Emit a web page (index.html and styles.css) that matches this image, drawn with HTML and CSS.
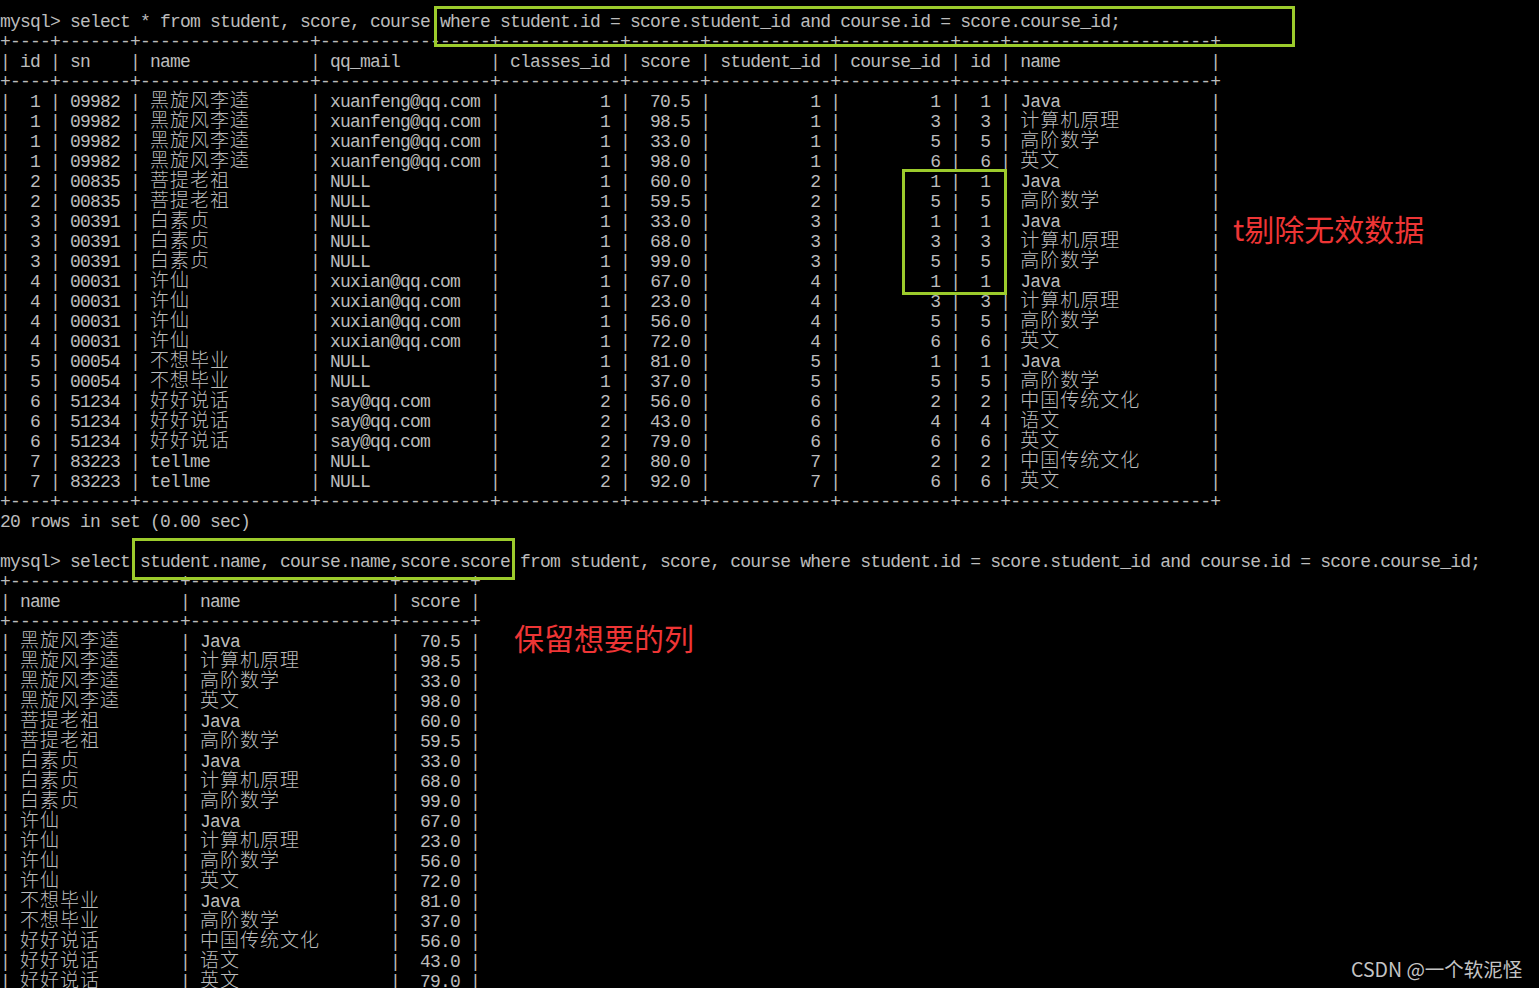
FILE: index.html
```html
<!DOCTYPE html>
<html lang="zh">
<head>
<meta charset="utf-8">
<title>mysql</title>
<link rel="stylesheet" href="styles.css">
</head>
<body>
<div class="term">
<div class="l">mysql&gt; select * from student, score, course where student.id = score.student_id and course.id = score.course_id;</div>
<div class="l">+----+-------+-----------------+-----------------+------------+-------+------------+-----------+----+--------------------+</div>
<div class="l">| id | sn    | name            | qq_mail         | classes_id | score | student_id | course_id | id | name               |</div>
<div class="l">+----+-------+-----------------+-----------------+------------+-------+------------+-----------+----+--------------------+</div>
<div class="l">|  1 | 09982 | <span class="c">黑旋风李逵</span>      | xuanfeng@qq.com |          1 |  70.5 |          1 |         1 |  1 | Java               |</div>
<div class="l">|  1 | 09982 | <span class="c">黑旋风李逵</span>      | xuanfeng@qq.com |          1 |  98.5 |          1 |         3 |  3 | <span class="c">计算机原理</span>         |</div>
<div class="l">|  1 | 09982 | <span class="c">黑旋风李逵</span>      | xuanfeng@qq.com |          1 |  33.0 |          1 |         5 |  5 | <span class="c">高阶数学</span>           |</div>
<div class="l">|  1 | 09982 | <span class="c">黑旋风李逵</span>      | xuanfeng@qq.com |          1 |  98.0 |          1 |         6 |  6 | <span class="c">英文</span>               |</div>
<div class="l">|  2 | 00835 | <span class="c">菩提老祖</span>        | NULL            |          1 |  60.0 |          2 |         1 |  1 | Java               |</div>
<div class="l">|  2 | 00835 | <span class="c">菩提老祖</span>        | NULL            |          1 |  59.5 |          2 |         5 |  5 | <span class="c">高阶数学</span>           |</div>
<div class="l">|  3 | 00391 | <span class="c">白素贞</span>          | NULL            |          1 |  33.0 |          3 |         1 |  1 | Java               |</div>
<div class="l">|  3 | 00391 | <span class="c">白素贞</span>          | NULL            |          1 |  68.0 |          3 |         3 |  3 | <span class="c">计算机原理</span>         |</div>
<div class="l">|  3 | 00391 | <span class="c">白素贞</span>          | NULL            |          1 |  99.0 |          3 |         5 |  5 | <span class="c">高阶数学</span>           |</div>
<div class="l">|  4 | 00031 | <span class="c">许仙</span>            | xuxian@qq.com   |          1 |  67.0 |          4 |         1 |  1 | Java               |</div>
<div class="l">|  4 | 00031 | <span class="c">许仙</span>            | xuxian@qq.com   |          1 |  23.0 |          4 |         3 |  3 | <span class="c">计算机原理</span>         |</div>
<div class="l">|  4 | 00031 | <span class="c">许仙</span>            | xuxian@qq.com   |          1 |  56.0 |          4 |         5 |  5 | <span class="c">高阶数学</span>           |</div>
<div class="l">|  4 | 00031 | <span class="c">许仙</span>            | xuxian@qq.com   |          1 |  72.0 |          4 |         6 |  6 | <span class="c">英文</span>               |</div>
<div class="l">|  5 | 00054 | <span class="c">不想毕业</span>        | NULL            |          1 |  81.0 |          5 |         1 |  1 | Java               |</div>
<div class="l">|  5 | 00054 | <span class="c">不想毕业</span>        | NULL            |          1 |  37.0 |          5 |         5 |  5 | <span class="c">高阶数学</span>           |</div>
<div class="l">|  6 | 51234 | <span class="c">好好说话</span>        | say@qq.com      |          2 |  56.0 |          6 |         2 |  2 | <span class="c">中国传统文化</span>       |</div>
<div class="l">|  6 | 51234 | <span class="c">好好说话</span>        | say@qq.com      |          2 |  43.0 |          6 |         4 |  4 | <span class="c">语文</span>               |</div>
<div class="l">|  6 | 51234 | <span class="c">好好说话</span>        | say@qq.com      |          2 |  79.0 |          6 |         6 |  6 | <span class="c">英文</span>               |</div>
<div class="l">|  7 | 83223 | tellme          | NULL            |          2 |  80.0 |          7 |         2 |  2 | <span class="c">中国传统文化</span>       |</div>
<div class="l">|  7 | 83223 | tellme          | NULL            |          2 |  92.0 |          7 |         6 |  6 | <span class="c">英文</span>               |</div>
<div class="l">+----+-------+-----------------+-----------------+------------+-------+------------+-----------+----+--------------------+</div>
<div class="l">20 rows in set (0.00 sec)</div>
<div class="l"> </div>
<div class="l">mysql&gt; select student.name, course.name,score.score from student, score, course where student.id = score.student_id and course.id = score.course_id;</div>
<div class="l">+-----------------+--------------------+-------+</div>
<div class="l">| name            | name               | score |</div>
<div class="l">+-----------------+--------------------+-------+</div>
<div class="l">| <span class="c">黑旋风李逵</span>      | Java               |  70.5 |</div>
<div class="l">| <span class="c">黑旋风李逵</span>      | <span class="c">计算机原理</span>         |  98.5 |</div>
<div class="l">| <span class="c">黑旋风李逵</span>      | <span class="c">高阶数学</span>           |  33.0 |</div>
<div class="l">| <span class="c">黑旋风李逵</span>      | <span class="c">英文</span>               |  98.0 |</div>
<div class="l">| <span class="c">菩提老祖</span>        | Java               |  60.0 |</div>
<div class="l">| <span class="c">菩提老祖</span>        | <span class="c">高阶数学</span>           |  59.5 |</div>
<div class="l">| <span class="c">白素贞</span>          | Java               |  33.0 |</div>
<div class="l">| <span class="c">白素贞</span>          | <span class="c">计算机原理</span>         |  68.0 |</div>
<div class="l">| <span class="c">白素贞</span>          | <span class="c">高阶数学</span>           |  99.0 |</div>
<div class="l">| <span class="c">许仙</span>            | Java               |  67.0 |</div>
<div class="l">| <span class="c">许仙</span>            | <span class="c">计算机原理</span>         |  23.0 |</div>
<div class="l">| <span class="c">许仙</span>            | <span class="c">高阶数学</span>           |  56.0 |</div>
<div class="l">| <span class="c">许仙</span>            | <span class="c">英文</span>               |  72.0 |</div>
<div class="l">| <span class="c">不想毕业</span>        | Java               |  81.0 |</div>
<div class="l">| <span class="c">不想毕业</span>        | <span class="c">高阶数学</span>           |  37.0 |</div>
<div class="l">| <span class="c">好好说话</span>        | <span class="c">中国传统文化</span>       |  56.0 |</div>
<div class="l">| <span class="c">好好说话</span>        | <span class="c">语文</span>               |  43.0 |</div>
<div class="l">| <span class="c">好好说话</span>        | <span class="c">英文</span>               |  79.0 |</div>
</div>
<div class="box box-where"></div>
<div class="box box-ids"></div>
<div class="box box-cols"></div>
<div class="note note-1">t剔除无效数据</div>
<div class="note note-2">保留想要的列</div>
<div class="mark">CSDN @一个软泥怪</div>
</body>
</html>
```

FILE: styles.css
```css
html, body {
  margin: 0;
  padding: 0;
  background: #000;
  width: 1539px;
  height: 988px;
  overflow: hidden;
}
body {
  position: relative;
}
.term {
  padding-top: 12px;
  color: #bcbcbc;
  font-family: "Liberation Mono", "DejaVu Sans Mono", monospace;
  font-size: 18px;
  letter-spacing: -0.8px;
}
.l {
  height: 20px;
  line-height: 20px;
  white-space: pre;
}
.c {
  font-family: "Noto Sans CJK SC", sans-serif;
  font-size: 19px;
  line-height: 0;
  letter-spacing: 1px;
  font-weight: 300;
}
.box {
  position: absolute;
  border: 3px solid #9ccb2c;
  box-sizing: border-box;
}
.box-where {
  left: 434px;
  top: 6px;
  width: 861px;
  height: 41px;
}
.box-ids {
  left: 902px;
  top: 169px;
  width: 105px;
  height: 126px;
}
.box-cols {
  left: 132px;
  top: 538px;
  width: 383px;
  height: 42px;
}
.note {
  position: absolute;
  color: #ee3535;
  font-family: "Noto Sans CJK SC", sans-serif;
  font-size: 30px;
  line-height: 32px;
  letter-spacing: 0;
}
.note-1 {
  left: 1233px;
  top: 212px;
}
.note-2 {
  left: 514px;
  top: 621px;
}
.mark {
  position: absolute;
  left: 1351px;
  top: 956px;
  color: #c4c4c4;
  font-family: "Noto Sans CJK SC", "Liberation Sans", sans-serif;
  font-size: 19.5px;
  line-height: 26px;
}
```
